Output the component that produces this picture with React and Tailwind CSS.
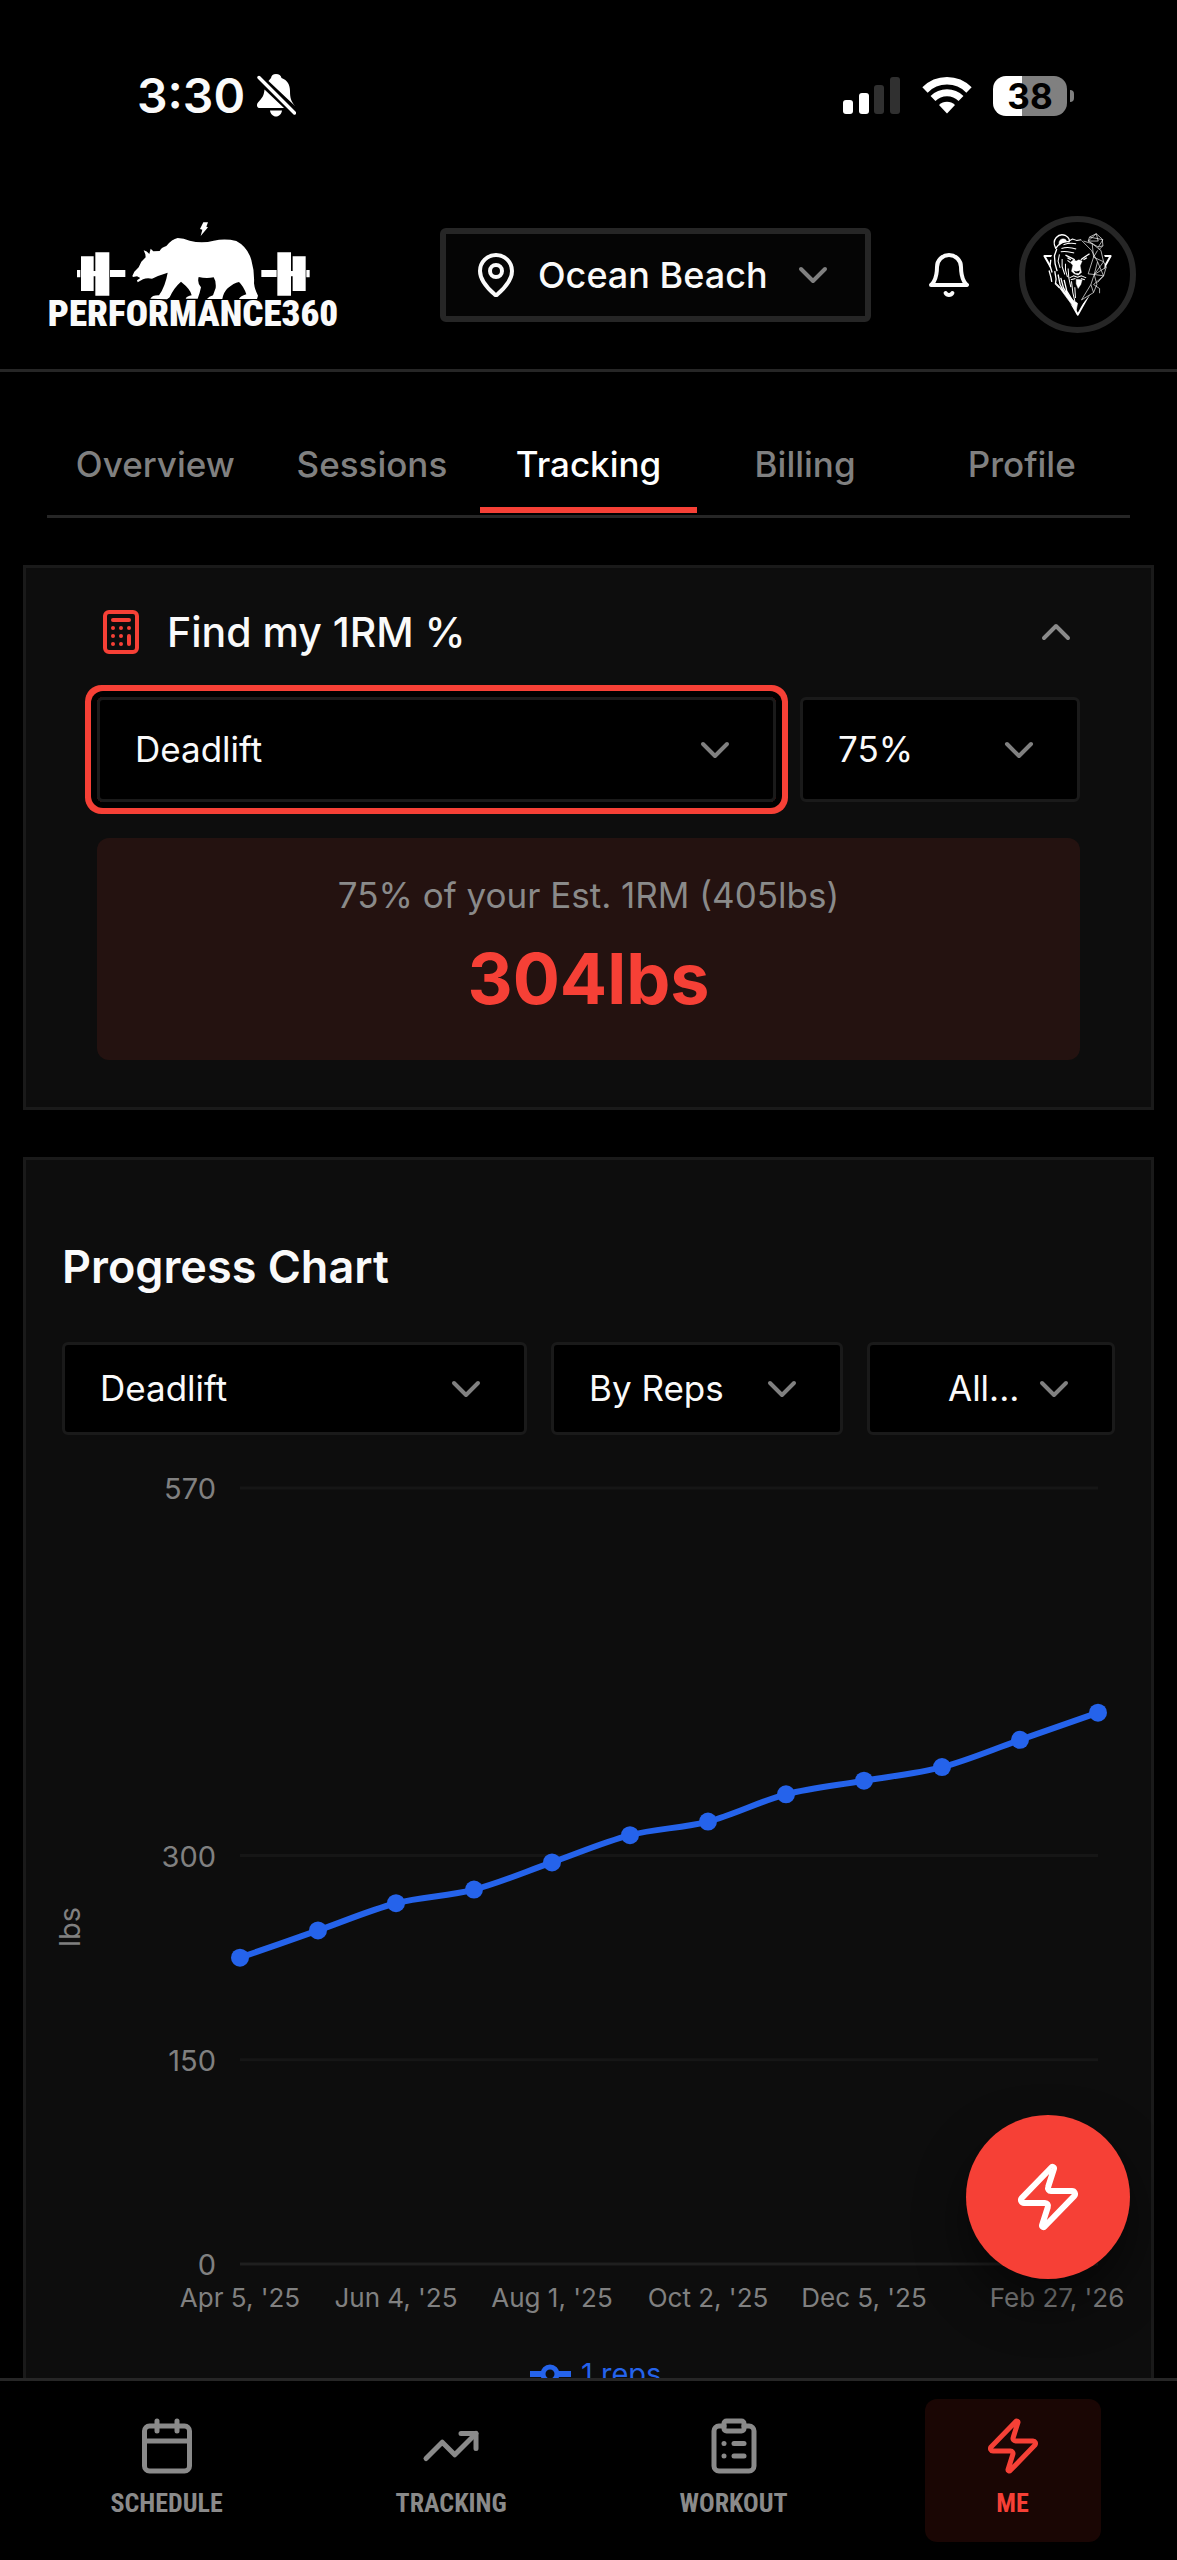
import React, { useState } from 'react';
import { Calculator, Calendar, ChevronDown, ChevronUp, ClipboardList, MapPin, TrendingUp, Zap } from 'lucide-react';

const tabs = ['Overview', 'Sessions', 'Tracking', 'Billing', 'Profile'];

const navItems = [
  { label: 'Schedule', icon: Calendar },
  { label: 'Tracking', icon: TrendingUp },
  { label: 'Workout', icon: ClipboardList },
  { label: 'Me', icon: Zap },
];

const lifts = [225, 245, 265, 275, 295, 315, 325, 345, 355, 365, 385, 405];

const xTicks = [
  { label: "Apr 5, '25", x: 178 },
  { label: "Jun 4, '25", x: 334 },
  { label: "Aug 1, '25", x: 490 },
  { label: "Oct 2, '25", x: 646 },
  { label: "Dec 5, '25", x: 802 },
  { label: "Feb 27, '26", x: 995 },
];

const PLOT = { left: 178, right: 1036, top: 53, bottom: 829, max: 570 };

const toY = (v) => PLOT.bottom - (v / PLOT.max) * (PLOT.bottom - PLOT.top);

const points = lifts.map((v, i) => ({
  x: PLOT.left + (i * (PLOT.right - PLOT.left)) / (lifts.length - 1),
  y: toY(v),
}));

// Monotone cubic through the points
const buildPath = (pts) => {
  const n = pts.length;
  const slopes = pts.slice(1).map((p, i) => (p.y - pts[i].y) / (p.x - pts[i].x));
  const tangents = pts.map((_, i) => {
    if (i === 0) return slopes[0];
    if (i === n - 1) return slopes[n - 2];
    const a = slopes[i - 1];
    const b = slopes[i];
    if (a * b <= 0) return 0;
    return Math.sign(a) * Math.min(2 * Math.abs(a), 2 * Math.abs(b), Math.abs(a + b) / 2);
  });
  let d = `M${pts[0].x},${pts[0].y}`;
  for (let i = 1; i < n; i++) {
    const dx = (pts[i].x - pts[i - 1].x) / 3;
    d += `C${pts[i - 1].x + dx},${pts[i - 1].y + dx * tangents[i - 1]},${pts[i].x - dx},${pts[i].y - dx * tangents[i]},${pts[i].x},${pts[i].y}`;
  }
  return d;
};

const StatusBar = () => (
  <div className="flex h-[181px] items-center justify-between pt-[10px] pr-[103px] pl-[137px]">
    <div className="flex items-center gap-3">
      <span className="text-5xl leading-[60px] font-semibold">3:30</span>
      <svg width="39" height="43" viewBox="0 0 39 43" fill="white">
        <path d="M19 0c3 0 5 1.500 5.500 4 6 2 8.500 7 8.500 13 0 7 1 10 5 15L11.500 7C13 5.500 13 5 14 4c.5-2.500 2-4 5-4z" />
        <path d="M7.500 15.500 27 34H3c-3 0-4-3-2-5.500 4.500-5 6-7 6.500-13z" />
        <path d="M13 36.500h12c-.5 3.500-3 6-6 6s-5.500-2.500-6-6z" />
        <path d="M2 3.500 37.500 39" stroke="white" strokeWidth="3.400" strokeLinecap="round" />
      </svg>
    </div>
    <div className="flex items-center gap-[21px]">
      <svg width="58" height="37" viewBox="0 0 58 37" fill="white">
        <rect x="0" y="23" width="10" height="14" rx="3" />
        <rect x="16" y="16" width="10" height="21" rx="3" />
        <rect x="31" y="8" width="10" height="29" rx="3" fill="#303030" />
        <rect x="47" y="0" width="10" height="37" rx="3" fill="#303030" />
      </svg>
      <svg width="50" height="37" viewBox="0 0 50 37" fill="none" stroke="white">
        <path d="M3 13a31 31 0 0 1 44 0" strokeWidth="7.500" />
        <path d="M11 21.500a20 20 0 0 1 28 0" strokeWidth="7" />
        <path d="M25 36.500l-8-8.500a11.500 11.500 0 0 1 16 0z" fill="white" stroke="none" />
      </svg>
      <div className="flex items-center gap-[3px]">
        <div className="flex h-10 w-[74px] items-center justify-center rounded-[13px] bg-linear-to-r from-white from-39% to-[#808080] to-39% text-[35px] leading-10 font-bold text-black">
          38
        </div>
        <div className="h-3 w-1 rounded-r-full bg-[#808080]" />
      </div>
    </div>
  </div>
);

const Logo = () => (
  <a href="#home" className="flex w-[292px] flex-col items-center">
    <svg className="w-full" viewBox="50 38 876 237" fill="white" aria-hidden="true">
      <path d="M519 42h14l-5 13 5 2-22 26 5-19-7-2z" />
      <path d="M140 185h10v22h-10zM152 144h38v104h-38zM195 132h42v130h-42zM190 188h5v16h-5zM239 185h46v21h-46z" />
      <path d="M693 185h46v21h-46zM741 132h41v130h-41zM782 188h5v16h-5zM787 144h39v104h-39zM828 185h10v22h-10z" />
      <path d="M306 203l6-13 13-13 8-17 13-13-1-9-5-12q10 2 17 11l4-16 8 8 19-1q4-10 20-15 17-21 34-24 18 0 36 8 37 9 72 0 35-7 68 1 34 18 45 57 10 35 8 70 1 15 12 37l-3 10h-54q4-9 22-14-8-24-22-37-16 3-34 19-12 11-16 32h-46q6-8 18-11l8-22q2-20-6-32-22 5-45-1-5 18 7 31-4 20-10 34h-36q4-8 18-10-2-17-32-41-22 19-34 47l-8 6-50-2q6-11 26-10 19-27 26-68-27 8-47 18-15-4-27 2l-16 9-2-6 10-7-10-5-12 2z" />
    </svg>
    <span className="font-['Liberation_Sans_Narrow','Roboto_Condensed',Roboto,sans-serif] text-[37px] leading-7 font-black">PERFORMANCE360</span>
  </a>
);

const BearAvatar = () => (
  <svg className="h-full w-full" viewBox="45 39 314 314" fill="none" stroke="white" strokeLinejoin="round" aria-hidden="true">
    <path d="M103 141h198L203 316z" strokeWidth="6" />
    <path d="M136 116l24-20 22-4 32 2 24 4 34 16 12 30-2 46-22 56-20 10-36 44-40-26-32-34-14-44 4-50z" fill="black" stroke="none" />
    {/* ears */}
    <path d="M137 118c-14-26 8-48 30-38 10 6 12 12 10 18-18-2-30 4-40 20z" strokeWidth="4" />
    <path d="M148 108c-4-12 4-20 14-18 6 2 8 6 6 8-8 0-14 4-20 10z" fill="white" strokeWidth="2" />
    <path d="M234 96l4-12 20-10 18 16 2 20-12 12M234 96l24-22 6 22-30 0 30 18 14-4M238 84l40 8-14 22" strokeWidth="2" />
    {/* brow and eyes */}
    <path d="M178 95l9-5 12 4 14-2M160 107c14-5 26-5 38-3M154 118c14-4 30-3 44 2M152 128c16-4 30 2 40 4" strokeWidth="3" />
    <path d="M166 138l20 10 8 4M238 134l-18 12-8 6M172 146l10 6M230 146l-10 6" strokeWidth="4" />
    {/* muzzle */}
    <path d="M190 152l8 4 8-4 10 4-6 14 4 20-10 8-12-4-8-8 4-18-8-8z" fill="white" strokeWidth="1" />
    <path d="M190 184l8 3 12-3-4 8h-10z" fill="black" stroke="none" />
    <path d="M178 206l12-6 12 4 12-4 14 6M182 212l14-4M212 208l12 4" strokeWidth="3" />
    <path d="M198 210l18 2-4 14-8 12-6-14z" fill="white" strokeWidth="1" />
    {/* fur on the left */}
    <path d="M140 120l-7 20 2 24 6 22M122 152l-2 18 6 20M117 184l6 22 2 12M134 186l4 24-2 14 12 12M144 196l6 30 10 20M152 206l8 30 16 28M162 212l8 34 16 26" strokeWidth="4" />
    <path d="M148 136l-4 20 6 20M156 150l0 22 8 24M166 164l0 18 6 22M174 178l2 28 6 28M184 216l4 34 6 26M194 234l2 32M180 160l-8-6" strokeWidth="3" />
    <path d="M138 222l14 14 18 18 20 20 12 8-4 22z" fill="white" strokeWidth="2" />
    {/* facets on the right */}
    <path d="M214 94l30 30 18 34-10 38 8 30-10 24M220 96l26 8 26 20 8 34 8 16-8 26-18 20M246 104l4 40 30 14-28 38 36-22M252 196l28 4-30 26 18 12" strokeWidth="2" />
    <path d="M262 158l18 42M262 124l-12 20-16 50 18 2-10 30-28 46 36-22-8-24M268 238l0 14" strokeWidth="2" />
  </svg>
);

// Native select with its own chevron on top
const SelectBox = ({ label, options, box, field = 'pl-[35px]' }) => (
  <div className={`relative ${box}`}>
    <select aria-label={label} className={`h-full w-full appearance-none rounded-md border-[3px] border-[#1a1a1a] bg-black text-[35px] text-[#fafafa] outline-none ${field}`}>
      {options.map((o) => <option key={o}>{o}</option>)}
    </select>
    <ChevronDown size={48} className="pointer-events-none absolute inset-y-0 right-[37px] my-auto text-[#808080]" />
  </div>
);

const ProgressChart = () => (
  <svg className="block w-full overflow-visible" viewBox="0 0 1053 1000" role="img" aria-label="Deadlift progress in lbs">
    {[570, 300, 150, 0].map((v) => (
      <g key={v}>
        <line x1={PLOT.left} x2={PLOT.right} y1={toY(v)} y2={toY(v)} stroke={v === 0 ? '#1f1f1f' : '#161616'} strokeWidth="3" />
        <text x="154" y={toY(v) + 11} textAnchor="end" fontSize="29" fill="#808080">{v}</text>
      </g>
    ))}
    {xTicks.map((t) => (
      <text key={t.label} x={t.x} y="872" textAnchor="middle" fontSize="26" fill="#808080">{t.label}</text>
    ))}
    <text transform="translate(18 492) rotate(-90)" textAnchor="middle" fontSize="29" fill="#808080">lbs</text>
    <path d={buildPath(points)} fill="none" stroke="#2563eb" strokeWidth="6" />
    {points.map((p) => <circle key={p.x} cx={p.x} cy={p.y} r="9" fill="#2563eb" />)}
    <path d="M468 939h14m14 0h13" stroke="#2563eb" strokeWidth="6" />
    <circle cx="488" cy="939" r="7" fill="none" stroke="#2563eb" strokeWidth="5" />
    <text x="519" y="949" fontSize="29" fill="#2563eb">1 reps</text>
  </svg>
);

export default function App() {
  const [activeTab, setActiveTab] = useState('Tracking');
  const [open, setOpen] = useState(true);

  return (
    <div className="flex h-screen flex-col overflow-hidden bg-black font-[Inter,sans-serif] text-[#fafafa]">
      <StatusBar />

      <header className="flex items-center gap-[46px] border-b-[3px] border-[#262626] pt-[35px] pr-[41px] pb-9 pl-[47px]">
        <Logo />
        <div className="relative mr-2 ml-auto h-[94px] w-[431px]">
          <select aria-label="Location" className="h-full w-full appearance-none rounded-md border-[6px] border-[#262626] bg-[#050505] pl-[92px] text-4xl font-medium outline-none">
            <option>Ocean Beach</option>
          </select>
          <MapPin size={48} className="pointer-events-none absolute inset-y-0 left-8 my-auto" />
          <ChevronDown size={48} className="pointer-events-none absolute inset-y-0 right-[34px] my-auto text-[#808080]" />
        </div>
        <button type="button" aria-label="Notifications">
          <svg width="48" height="48" viewBox="0 0 24 24" fill="none" stroke="currentColor" strokeWidth="2" strokeLinecap="round" strokeLinejoin="round">
            <path d="M6 8a6 6 0 0 1 12 0c0 7 3 9 3 9H3s3-2 3-9" />
            <path d="M10.300 21a1.940 1.940 0 0 0 3.400 0" />
          </svg>
        </button>
        <button type="button" aria-label="Account" className="size-[117px] overflow-hidden rounded-full border-[6px] border-[#262626]">
          <BearAvatar />
        </button>
      </header>

      <main className="relative min-h-0 flex-1">
        <div className="h-full overflow-hidden">
          <div role="tablist" className="mx-[47px] mt-12 grid grid-cols-5 border-b-[3px] border-[#262626] pb-0.5">
            {tabs.map((t) => (
              <button key={t} type="button" role="tab" aria-selected={activeTab === t} onClick={() => setActiveTab(t)}
                className={`h-[93px] border-b-[6px] pt-0.5 text-[35px] font-medium ${activeTab === t ? 'border-[#f64036] text-white' : 'border-transparent text-[#808080]'}`}>
                {t}
              </button>
            ))}
          </div>

          {/* 1RM calculator */}
          <section className="mx-[23px] mt-[47px] border-[3px] border-[#1a1a1a] bg-[#0d0d0d] px-[71px] pt-10 pb-[47px]">
            <button type="button" onClick={() => setOpen(!open)} className="flex h-12 w-full items-center gap-[22px]">
              <Calculator size={48} className="text-[#f64036]" />
              <span className="text-[41px] leading-[48px] font-medium">Find my 1RM %</span>
              <ChevronUp size={48} className={`ml-auto text-[#8a8a8a] ${open ? '' : 'rotate-180'}`} />
            </button>
            {open && (
              <>
                <div className="mt-[41px] flex gap-6">
                  <SelectBox label="Lift" options={['Deadlift', 'Back Squat', 'Bench Press']}
                    box="h-[105px] flex-1 rounded-md ring-6 ring-[#f64036] ring-offset-6 ring-offset-black" />
                  <SelectBox label="Percent" options={['75%', '80%', '85%']} box="h-[105px] w-[280px]" />
                </div>
                <div className="mt-9 rounded-xl bg-[#241210] py-[33px] text-center">
                  <p className="text-[35px] leading-[48px] text-[#8a8a8a]">75% of your Est. 1RM (405lbs)</p>
                  <p className="mt-3 text-[70px] leading-[96px] font-bold text-[#f64036]">304lbs</p>
                </div>
              </>
            )}
          </section>

          {/* Progress chart */}
          <section className="mx-[23px] mt-[47px] border-[3px] border-[#1a1a1a] bg-[#0d0d0d] px-9 pt-[74px]">
            <h2 className="text-[45px] leading-[66px] font-semibold">Progress Chart</h2>
            <div className="mt-[42px] flex gap-6">
              <SelectBox label="Chart lift" options={['Deadlift', 'Back Squat', 'Bench Press']} box="h-[93px] flex-1" />
              <SelectBox label="Grouping" options={['By Reps', 'By Weight']} box="h-[93px] w-[292px]" />
              <SelectBox label="Range" options={['All...', '1Y', '6M']} box="h-[93px] w-[248px]" field="pl-[78px]" />
            </div>
            <ProgressChart />
          </section>
        </div>

        <button type="button" aria-label="Quick start"
          className="absolute right-[47px] bottom-[99px] flex size-[164px] items-center justify-center rounded-full bg-[#f64036] text-white shadow-[0_24px_48px_rgba(0,0,0,0.5)]">
          <Zap size={72} />
        </button>
      </main>

      <nav className="flex justify-around border-t-[3px] border-[#262626] bg-black pt-[18px] pr-[26px] pb-[18px] pl-6">
        {navItems.map(({ label, icon: Icon }) => (
          <a key={label} href={`#${label.toLowerCase()}`}
            className={`flex h-[143px] min-w-[176px] flex-col items-center gap-1.5 rounded-xl px-9 pt-[17px] ${label === 'Me' ? 'bg-[#1a0604] text-[#f64036]' : 'text-[#8a8a8a]'}`}>
            <Icon size={60} />
            <span className="font-['Liberation_Sans_Narrow','Roboto_Condensed',Roboto,sans-serif] text-[26px] leading-[42px] font-bold uppercase">{label}</span>
          </a>
        ))}
      </nav>
    </div>
  );
}
